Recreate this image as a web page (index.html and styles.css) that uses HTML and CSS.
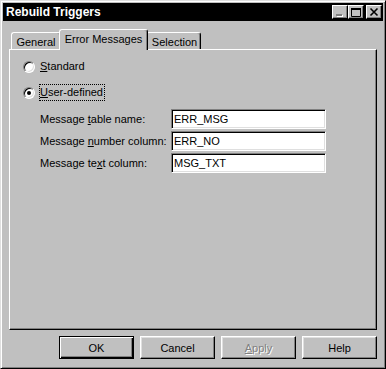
FILE: index.html
```html
<!DOCTYPE html>
<html lang="en">
<head>
  <meta charset="UTF-8" />
  <title>Rebuild Triggers</title>
  <link rel="stylesheet" href="styles.css">
</head>
<body>
  <div class="window">
    <div class="titlebar">
      <span class="title">Rebuild Triggers</span>
      <div class="controls">
        <span class="cap-btn">
          <svg width="14" height="12" viewBox="0 0 14 12"><rect x="4" y="9" width="6" height="2" fill="#fff"/><rect x="3" y="8" width="6" height="2" fill="#808080"/></svg>
        </span>
        <span class="cap-btn">
          <svg width="14" height="12" viewBox="0 0 14 12"><path d="M2.5 2.5h9v8h-9z" fill="none" stroke="#000"/><rect x="2" y="2" width="10" height="2" fill="#000"/></svg>
        </span>
        <span class="cap-btn close">
          <svg width="14" height="12" viewBox="0 0 14 12"><path d="M3.5 2.5l7 7M10.5 2.5l-7 7" stroke="#000" stroke-width="1.6" fill="none"/></svg>
        </span>
      </div>
    </div>

    <div class="content">
      <div class="tabs">
        <div class="tab tab-general">General</div>
        <div class="tab tab-active">Error Messages</div>
        <div class="tab tab-selection">Selection</div>
      </div>

      <div class="panel">
        <div class="radio-row">
          <span class="radio"></span>
          <span class="radio-label"><u>S</u>tandard</span>
        </div>
        <div class="radio-row">
          <span class="radio checked"></span>
          <span class="radio-label focused"><u>U</u>ser-defined</span>
        </div>

        <div class="fields">
          <label>Message <u>t</u>able name:</label>
          <div class="field">ERR_MSG</div>
          <label>Message <u>n</u>umber column:</label>
          <div class="field">ERR_NO</div>
          <label>Message te<u>x</u>t column:</label>
          <div class="field">MSG_TXT</div>
        </div>
      </div>

      <div class="buttons">
        <button class="btn default">OK</button>
        <button class="btn">Cancel</button>
        <button class="btn disabled"><u>A</u>pply</button>
        <button class="btn">Help</button>
      </div>
    </div>
  </div>
</body>
</html>
```

FILE: styles.css
```css
* {
  margin: 0;
  padding: 0;
  box-sizing: border-box;
}

body {
  font-family: 'Liberation Sans', Arial, sans-serif;
  font-size: 11px;
  color: #000;
  background: #c0c0c0;
}

.window {
  width: 386px;
  height: 369px;
  background: #c0c0c0;
  border: 1px solid;
  border-color: #dfdfdf #000 #000 #dfdfdf;
  box-shadow: inset 1px 1px #fff, inset -1px -1px #808080;
  padding: 2px;
}

.titlebar {
  height: 18px;
  background: #000;
  display: flex;
  align-items: center;
  justify-content: space-between;
  padding: 0 1px 0 3px;
}

.title {
  color: #fff;
  font-weight: bold;
  font-size: 12px;
}

.controls {
  display: flex;
}

.cap-btn {
  width: 16px;
  height: 14px;
  background: #c0c0c0;
  border: 1px solid;
  border-color: #fff #000 #000 #fff;
  box-shadow: inset -1px -1px #808080;
  display: flex;
  align-items: flex-start;
}

.cap-btn.close {
  margin-left: 2px;
}

.content {
  padding: 0 6px;
}

.tabs {
  display: flex;
  align-items: flex-end;
  height: 20px;
  margin-top: 8px;
  padding-left: 2px;
}

.tab {
  height: 17px;
  border: 1px solid;
  border-bottom: none;
  border-color: #fff #000 #000 #fff;
  border-radius: 3px 3px 0 0;
  box-shadow: inset -1px 0 #808080;
  background: #c0c0c0;
  display: flex;
  align-items: center;
  justify-content: center;
  padding-top: 1px;
}

.tab-general {
  width: 50px;
}

.tab-active {
  width: 89px;
  height: 21px;
  margin: 0 -2px -1px -2px;
  padding-top: 0;
  padding-bottom: 3px;
  position: relative;
  z-index: 1;
}

.tab-selection {
  width: 55px;
  padding-left: 2px;
}

.panel {
  height: 281px;
  border: 1px solid;
  border-color: #fff #000 #000 #fff;
  box-shadow: inset -1px -1px #808080;
  padding: 8px 0 0 13px;
}

.radio-row {
  display: flex;
  align-items: center;
  height: 17px;
  margin-bottom: 9px;
}

.radio {
  width: 12px;
  height: 12px;
  border-radius: 50%;
  background: #fff;
  border: 1px solid;
  border-color: #808080 #fff #fff #808080;
  box-shadow: inset 1px 1px #000, inset -1px -1px #dfdfdf;
  display: flex;
  align-items: center;
  justify-content: center;
}

.radio.checked::after {
  content: '';
  width: 4px;
  height: 4px;
  border-radius: 50%;
  background: #000;
}

.radio-label {
  margin-left: 4px;
  height: 17px;
  line-height: 15px;
  border: 1px dotted transparent;
  padding: 0 1px 0 0;
}

.radio-label.focused {
  border-color: #000;
}

.fields {
  display: grid;
  grid-template-columns: 131px 155px;
  grid-auto-rows: 20px;
  row-gap: 2px;
  align-items: center;
  margin: -1px 0 0 17px;
}

.field {
  height: 20px;
  background: #fff;
  border: 1px solid;
  border-color: #808080 #fff #fff #808080;
  box-shadow: inset 1px 1px #000, inset -1px -1px #dfdfdf;
  padding: 0 2px;
  line-height: 18px;
}

.buttons {
  display: flex;
  justify-content: flex-end;
  gap: 6px;
  margin-top: 6px;
}

.btn {
  width: 75px;
  height: 23px;
  font-family: inherit;
  font-size: 11px;
  color: #000;
  background: #c0c0c0;
  border: 1px solid;
  border-color: #fff #000 #000 #fff;
  box-shadow: inset -1px -1px #808080, inset 1px 1px #dfdfdf;
}

.btn.default {
  border-color: #000;
  box-shadow: inset 1px 1px #fff, inset -1px -1px #000, inset -2px -2px #808080;
}

.btn.disabled {
  color: #808080;
  text-shadow: 1px 1px #fff;
}
```
